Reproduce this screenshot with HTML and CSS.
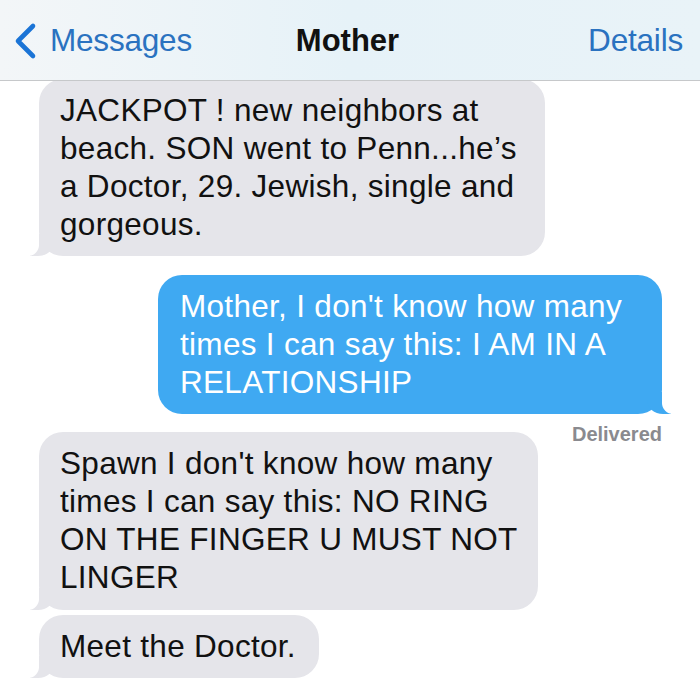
FILE: index.html
```html
<!DOCTYPE html>
<html>
<head>
<meta charset="utf-8">
<link rel="stylesheet" href="styles.css">
</head>
<body>
<div class="screen">
  <header class="navbar">
    <div class="nav-left">
      <svg class="chevron" width="26" height="38" viewBox="0 0 26 38"><path d="M21 4 L6 19 L21 34" fill="none" stroke="#1b74d6" stroke-width="4.6" stroke-linecap="round" stroke-linejoin="round"/></svg>
      <span class="nav-link">Messages</span>
    </div>
    <div class="nav-title">Mother</div>
    <div class="nav-right"><span class="nav-link">Details</span></div>
  </header>
  <main class="thread">
    <div class="bubble in first w1">JACKPOT ! new neighbors at<br>beach. SON went to Penn...he’s<br>a Doctor, 29. Jewish, single and<br>gorgeous.</div>
    <div class="bubble out w2">Mother, I don't know how many<br>times I can say this: I AM IN A<br>RELATIONSHIP</div>
    <div class="status">Delivered</div>
    <div class="bubble in w3">Spawn I don't know how many<br>times I can say this: NO RING<br>ON THE FINGER U MUST NOT<br>LINGER</div>
    <div class="bubble in follow">Meet the Doctor.</div>
  </main>
</div>
</body>
</html>
```
FILE: styles.css
```css
html, body {
  margin: 0;
  padding: 0;
  background: #ffffff;
}
.screen {
  width: 700px;
  height: 700px;
  overflow: hidden;
  font-family: "Liberation Sans", Arial, sans-serif;
}
.navbar {
  position: relative;
  z-index: 2;
  height: 80px;
  border-bottom: 1.5px solid #c6c8ca;
  background: linear-gradient(90deg, #f3f6f8 0%, #e6f2f8 50%, #e9f3f8 100%);
  display: grid;
  grid-template-columns: 1fr auto 1fr;
  align-items: center;
  padding: 0 17px 0 12px;
}
.nav-left {
  display: flex;
  align-items: center;
  gap: 12px;
  padding-top: 1px;
}
.chevron {
  display: block;
}
.nav-link {
  color: #2a72c0;
  font-size: 31.5px;
  letter-spacing: -0.2px;
}
.nav-title {
  font-size: 31px;
  font-weight: bold;
  color: #111;
  letter-spacing: 0;
  padding-top: 1px;
}
.nav-right {
  text-align: right;
  padding-top: 1px;
}
.thread {
  display: flex;
  flex-direction: column;
  padding: 0 38px 0 39px;
}
.bubble {
  position: relative;
  box-sizing: border-box;
  padding: 12px 18px 13px 21px;
  border-radius: 24px;
  font-size: 31.5px;
  letter-spacing: 0.3px;
  line-height: 38px;
  color: #111;
  white-space: nowrap;
}
.w1 { width: 506px; }
.w2 { width: 504px; }
.w3 { width: 499px; padding-bottom: 14px; }
.bubble.in {
  align-self: flex-start;
  background: #e5e5ea;
}
.bubble.out {
  align-self: flex-end;
  background: #3fa9f2;
  color: #fff;
  margin-top: 19px;
  padding-left: 22px;
}
.bubble.first {
  margin-top: -2px;
}
.bubble.follow {
  margin-top: 5px;
  padding-right: 23px;
}
.bubble.in::before {
  content: "";
  position: absolute;
  bottom: 0;
  left: -9px;
  width: 24px;
  height: 22px;
  background: #e5e5ea;
  border-bottom-right-radius: 16px 14px;
}
.bubble.in::after {
  content: "";
  position: absolute;
  bottom: 0;
  left: -17px;
  width: 17px;
  height: 24px;
  background: #fff;
  border-bottom-right-radius: 11px;
}
.bubble.out::before {
  content: "";
  position: absolute;
  bottom: 0;
  right: -9px;
  width: 24px;
  height: 22px;
  background: #3fa9f2;
  border-bottom-left-radius: 16px 14px;
}
.bubble.out::after {
  content: "";
  position: absolute;
  bottom: 0;
  right: -17px;
  width: 17px;
  height: 24px;
  background: #fff;
  border-bottom-left-radius: 11px;
}
.status {
  align-self: flex-end;
  font-size: 20px;
  font-weight: bold;
  color: #8a8a8f;
  line-height: 22px;
  margin: 9px 0 -13px;
}
```
